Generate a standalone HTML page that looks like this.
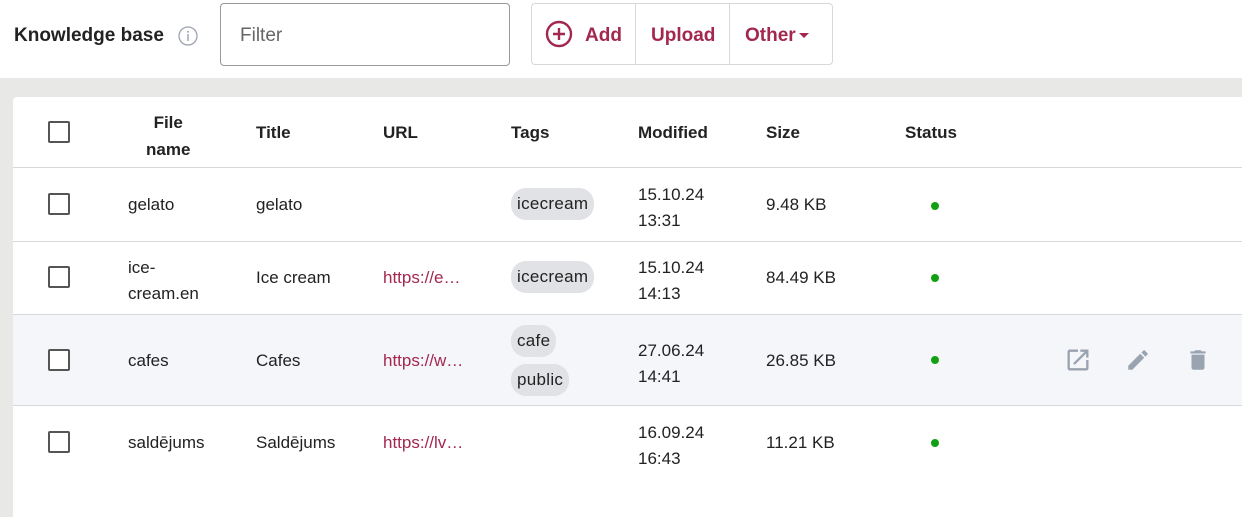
<!DOCTYPE html>
<html><head><style>
*{box-sizing:border-box;margin:0;padding:0}
body{width:1242px;height:517px;overflow:hidden;background:#fff;font-family:"Liberation Sans",Arial,sans-serif;font-size:17px;color:#222;position:relative}
.a{position:absolute}
.cb{position:absolute;left:48px;width:22px;height:22px;border:2px solid #555;border-radius:2px;background:#fff}
.tag{position:absolute;background:#e0e2e5;border-radius:15px;padding:0 6px;height:32px;line-height:32px;font-size:17px;letter-spacing:0.3px}
.url{color:#a3284f}
.dot{position:absolute;left:931px;width:8px;height:8px;border-radius:50%;background:#11a011}
.sep{position:absolute;left:13px;right:0;height:1px;background:#d6d8dc}
.h{font-weight:bold;color:#222}
</style></head><body>
<div class="a h" style="left:14px;top:25px;font-size:19px">Knowledge base</div>
<svg class="a" style="left:177px;top:25px" width="22" height="22" viewBox="0 0 22 22"><circle cx="11" cy="11" r="9" fill="none" stroke="#9aa3b0" stroke-width="1.3"/><circle cx="11" cy="6.8" r="1" fill="#9aa3b0"/><rect x="10.3" y="9" width="1.4" height="7" fill="#9aa3b0"/></svg>
<div class="a" style="left:220px;top:3px;width:290px;height:63px;border:1px solid #999;border-radius:4px"></div>
<div class="a" style="left:240px;top:25px;font-size:19px;color:#666">Filter</div>
<div class="a" style="left:531px;top:3px;width:302px;height:62px;border:1px solid #d6d8dc;border-radius:4px"></div>
<div class="a" style="left:635px;top:4px;width:1px;height:60px;background:#d6d8dc"></div>
<div class="a" style="left:729px;top:4px;width:1px;height:60px;background:#d6d8dc"></div>
<svg class="a" style="left:545px;top:20px" width="28" height="28" viewBox="0 0 28 28"><circle cx="14" cy="14" r="12" fill="none" stroke="#a3284f" stroke-width="2.4"/><path d="M14 8v12M8 14h12" stroke="#a3284f" stroke-width="2.4"/></svg>
<div class="a h" style="left:585px;top:25px;font-size:19px;color:#a3284f">Add</div>
<div class="a h" style="left:651px;top:25px;font-size:19px;color:#a3284f">Upload</div>
<div class="a h" style="left:745px;top:25px;font-size:19px;color:#a3284f">Other</div>
<svg class="a" style="left:799px;top:33px" width="10" height="6"><path d="M0 0h10L5 5z" fill="#a3284f"/></svg>
<div class="a" style="left:0;top:78px;width:1242px;height:439px;background:#e8e9e6"></div>
<div class="a" style="left:13px;top:97px;width:1229px;height:420px;background:#fff;border-top-left-radius:4px"></div>
<div class="a" style="left:13px;top:315px;width:1229px;height:90px;background:#f5f6fa"></div>
<div class="cb" style="top:121px"></div>
<div class="a h" style="left:146px;top:109px;line-height:27px;text-align:center">File<br>name</div>
<div class="a h" style="left:256px;top:123px">Title</div>
<div class="a h" style="left:383px;top:123px">URL</div>
<div class="a h" style="left:511px;top:123px">Tags</div>
<div class="a h" style="left:638px;top:123px">Modified</div>
<div class="a h" style="left:766px;top:123px">Size</div>
<div class="a h" style="left:905px;top:123px">Status</div>
<div class="sep" style="top:167px"></div>
<div class="cb" style="top:193px"></div>
<div class="a" style="left:128px;top:195px">gelato</div>
<div class="a" style="left:256px;top:195px">gelato</div>
<div class="tag" style="left:511px;top:188px">icecream</div>
<div class="a" style="left:638px;top:182px;line-height:26px">15.10.24<br>13:31</div>
<div class="a" style="left:766px;top:195px">9.48 KB</div>
<div class="dot" style="top:202px"></div>
<div class="sep" style="top:241px"></div>
<div class="cb" style="top:266px"></div>
<div class="a" style="left:128px;top:255px;line-height:26px">ice-<br>cream.en</div>
<div class="a" style="left:256px;top:268px">Ice cream</div>
<div class="a url" style="left:383px;top:268px">https://e…</div>
<div class="tag" style="left:511px;top:261px">icecream</div>
<div class="a" style="left:638px;top:255px;line-height:26px">15.10.24<br>14:13</div>
<div class="a" style="left:766px;top:268px">84.49 KB</div>
<div class="dot" style="top:274px"></div>
<div class="sep" style="top:314px"></div>
<div class="cb" style="top:349px"></div>
<div class="a" style="left:128px;top:351px">cafes</div>
<div class="a" style="left:256px;top:351px">Cafes</div>
<div class="a url" style="left:383px;top:351px">https://w…</div>
<div class="tag" style="left:511px;top:325px">cafe</div>
<div class="tag" style="left:511px;top:364px">public</div>
<div class="a" style="left:638px;top:338px;line-height:26px">27.06.24<br>14:41</div>
<div class="a" style="left:766px;top:351px">26.85 KB</div>
<div class="dot" style="top:356px"></div>
<svg class="a" style="left:1064px;top:346px" width="28" height="28" viewBox="0 0 24 24"><path d="M19 19H5V5h7V3H5a2 2 0 0 0-2 2v14a2 2 0 0 0 2 2h14a2 2 0 0 0 2-2v-7h-2v7zM14 3v2h3.6l-9.8 9.8 1.4 1.4L19 6.4V10h2V3h-7z" fill="#9aa3b0"/></svg>
<svg class="a" style="left:1125px;top:347px" width="26" height="26" viewBox="0 0 24 24"><path d="M3 17.25V21h3.75L17.8 9.94l-3.75-3.75L3 17.25zM20.7 7.04a1 1 0 0 0 0-1.41l-2.34-2.34a1 1 0 0 0-1.41 0l-1.83 1.83 3.75 3.75 1.83-1.83z" fill="#9aa3b0"/></svg>
<svg class="a" style="left:1185px;top:347px" width="26" height="26" viewBox="0 0 24 24"><path d="M6 19a2 2 0 0 0 2 2h8a2 2 0 0 0 2-2V7H6v12zM19 4h-3.5l-1-1h-5l-1 1H5v2h14V4z" fill="#9aa3b0"/></svg>
<div class="sep" style="top:405px"></div>
<div class="cb" style="top:431px"></div>
<div class="a" style="left:128px;top:433px">saldējums</div>
<div class="a" style="left:256px;top:433px">Saldējums</div>
<div class="a url" style="left:383px;top:433px">https://lv…</div>
<div class="a" style="left:638px;top:420px;line-height:26px">16.09.24<br>16:43</div>
<div class="a" style="left:766px;top:433px">11.21 KB</div>
<div class="dot" style="top:439px"></div>
</body></html>
